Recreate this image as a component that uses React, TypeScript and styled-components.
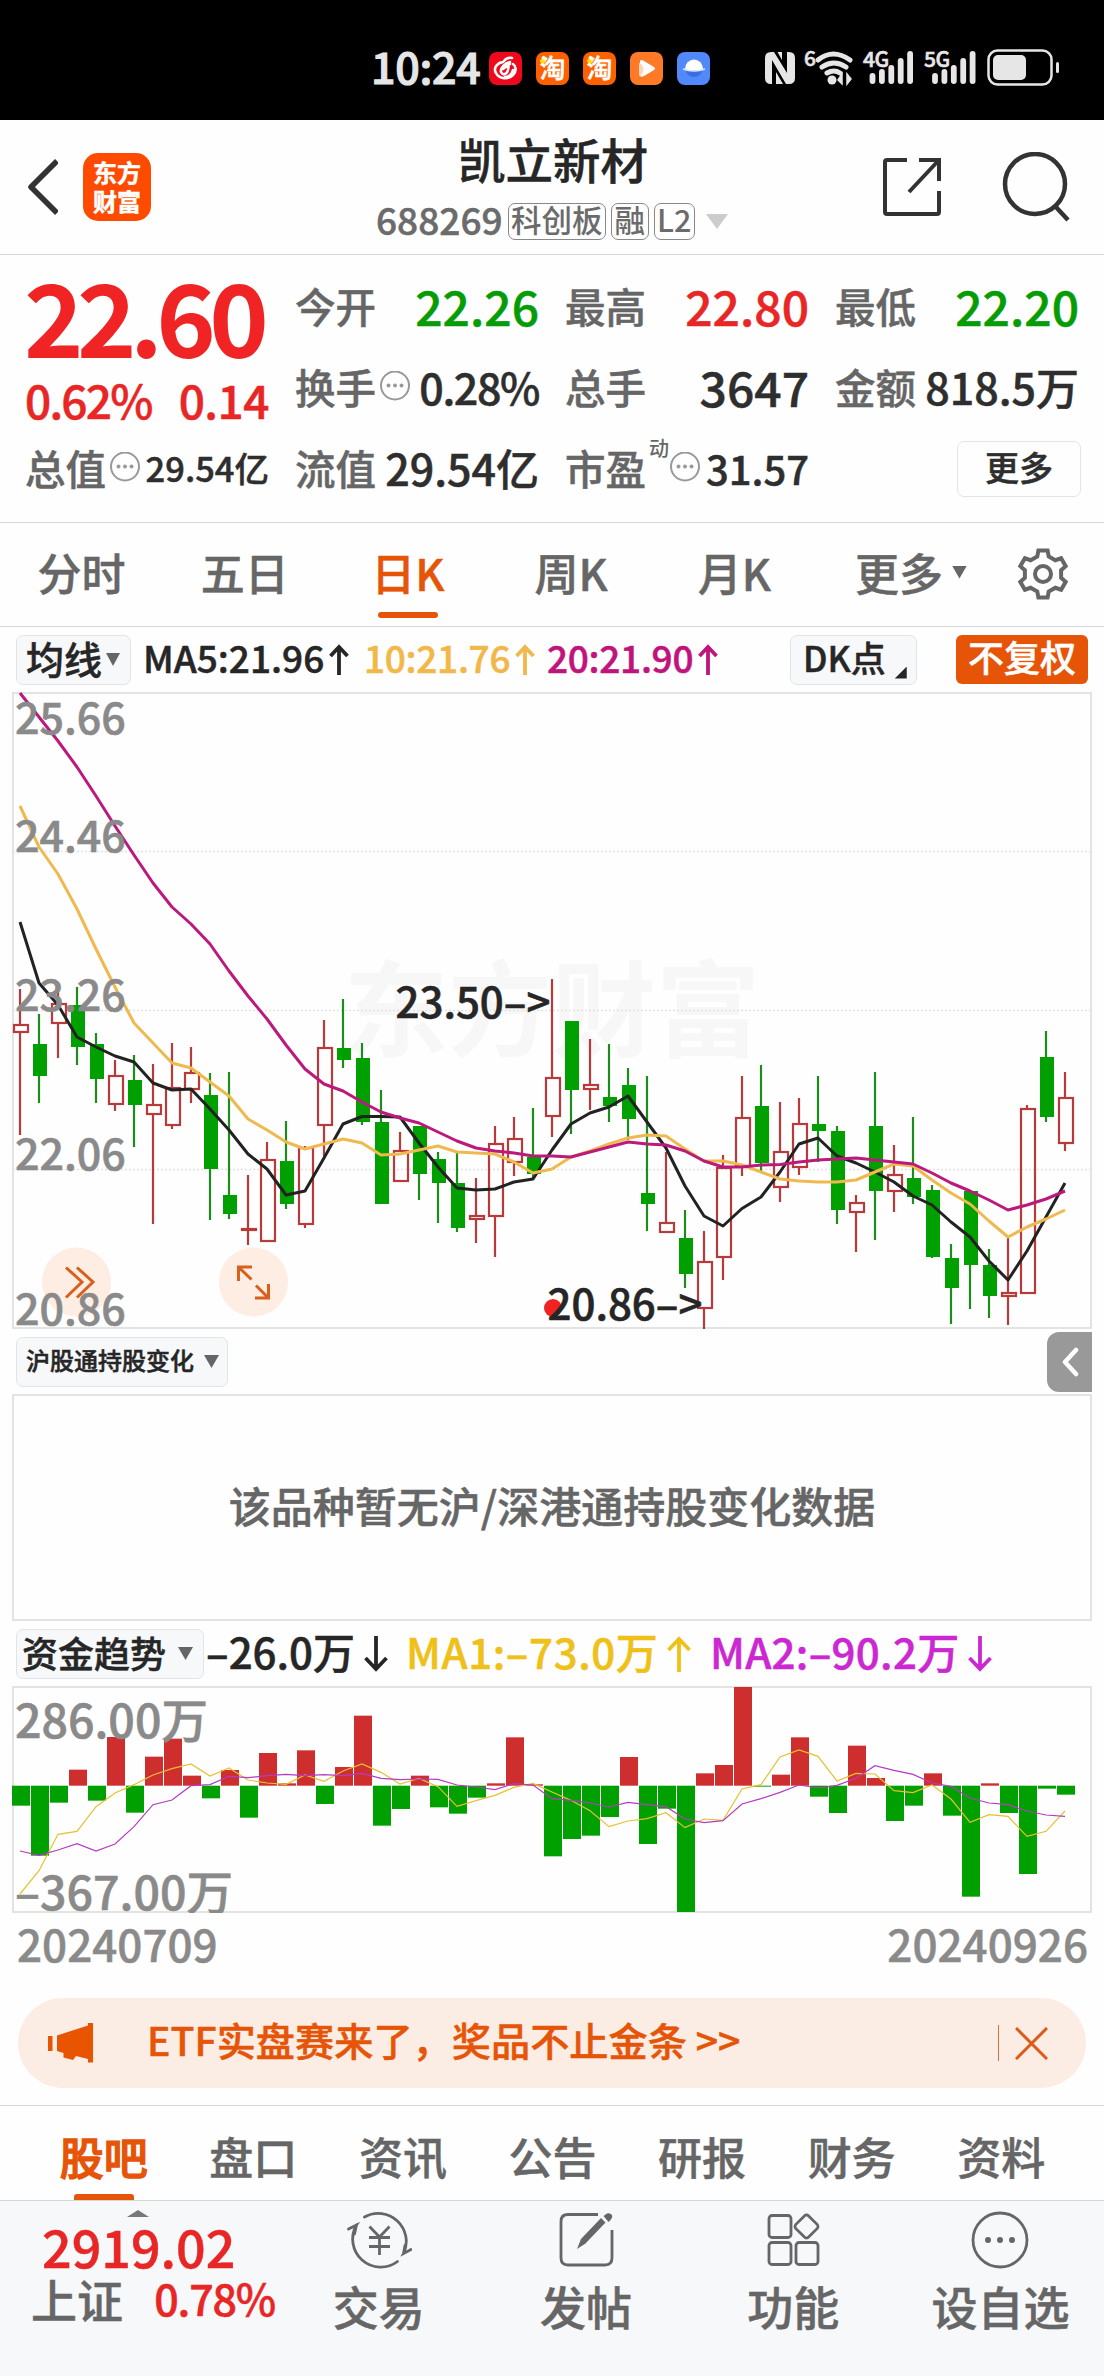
import React from "react";
import styled, { createGlobalStyle, css } from "styled-components";

const RED = "#e82626";
const GREEN = "#069c06";
const ORANGE = "#e65407";
const GRAY = "#666";
const DARK = "#2e2e2e";
const AXIS = "#8a8a8a";
const FONT = '"Noto Sans CJK SC", "Noto Sans", sans-serif';

const Global = createGlobalStyle`
  * { box-sizing: border-box; }
  body { margin: 0; background: #fff; }
  svg { display: block; flex: none; }
`;

const Page = styled.div`
  width: 1104px;
  height: 2376px;
  display: flex;
  flex-direction: column;
  background: #fefefe;
  font-family: ${FONT};
  font-weight: 500;
  color: ${DARK};
  white-space: nowrap;
  overflow: hidden;
  -webkit-text-stroke: 0.500px currentColor;
`;

const Txt = styled.span<{ $size: number; $color?: string; $ls?: number }>`
  font-size: ${(p) => p.$size}px;
  line-height: 1.1;
  color: ${(p) => p.$color ?? "inherit"};
  letter-spacing: ${(p) => p.$ls ?? 0}px;
`;

const Triangle = styled.i<{ $w: number; $h: number; $color: string; $up?: boolean; $ml?: number }>`
  display: block;
  flex: none;
  width: ${(p) => p.$w}px;
  height: ${(p) => p.$h}px;
  margin-left: ${(p) => p.$ml ?? 0}px;
  background: ${(p) => p.$color};
  clip-path: ${(p) => (p.$up ? "polygon(50% 0, 100% 100%, 0 100%)" : "polygon(0 0, 100% 0, 50% 100%)")};
`;

/* ---------- status bar ---------- */

const StatusBar = styled.header`
  height: 120px;
  flex: none;
  background: #000;
  color: #e6e6e6;
  display: flex;
  align-items: flex-start;
  padding: 44px 40px 0 371px;
`;
const Clock = styled.div`
  width: 118px;
  font-size: 43px;
  line-height: 43px;
  letter-spacing: -0.300px;
  -webkit-text-stroke: 1.100px currentColor;
`;
const AppIcons = styled.div`
  display: flex;
  gap: 14px;
  padding-top: 8px;
`;
const AppIcon = styled.div<{ $bg: string }>`
  width: 33px;
  height: 33px;
  border-radius: 8px;
  background: ${(p) => p.$bg};
  color: #fff;
  font-size: 26px;
  line-height: 30px;
  text-align: center;
`;
const TaoIcon = styled(AppIcon)`
  background: radial-gradient(circle at 7px 9px, #ffe600 2.500px, transparent 3px), #ff6000;
`;
const StatusIcons = styled.svg`
  margin-left: auto;
`;

function SignalBars({ x }: { x: number }) {
  return (
    <g stroke="#e6e6e6" strokeWidth="5.8" strokeLinecap="round">
      {[76, 72, 68, 61, 54].map((top, i) => (
        <path key={i} d={`M${x + i * 9.4} ${top}V81`} />
      ))}
    </g>
  );
}

function Status() {
  return (
    <StatusBar>
      <Clock>10:24</Clock>
      <AppIcons>
        <AppIcon $bg="#ee0a1c">
          <svg width="33" height="33" viewBox="0 0 33 33" fill="none" stroke="#fff" strokeWidth="2.6" strokeLinecap="round">
            <path d="M23 6q-5-1-8 3M14 10c-6 1-10 6-7 11 3 6 12 7 17 2 4-4 3-9 0-11M21 10c-5 1-10 6-9 10 2 4 6 2 7-2l1-7M14 17l7-5M16 25c4 0 7-3 8-7" />
          </svg>
        </AppIcon>
        <TaoIcon $bg="#ff6000">淘</TaoIcon>
        <TaoIcon $bg="#ff6000">淘</TaoIcon>
        <AppIcon $bg="#ff7a26">
          <svg width="33" height="33" viewBox="0 0 33 33">
            <path d="M10 9q1-2 4 0l10 6q2 1.500 0 3l-10 6q-4 2-4-1z" fill="#fff" />
            <path d="M9 11a7 7 0 0 1 0 13z" fill="#ffd5b8" />
          </svg>
        </AppIcon>
        <AppIcon $bg="#5189fb">
          <svg width="33" height="33" viewBox="0 0 33 33">
            <path d="M9 18a8 7 0 0 0 16 0z" fill="#3a6de0" />
            <path d="M8 17a9 9.500 0 0 1 18 0q-9 3-18 0z" fill="#fff" />
            <path d="M6 17q11 4 22 0" stroke="#dfe9ff" strokeWidth="1.500" fill="none" />
          </svg>
        </AppIcon>
      </AppIcons>
      <StatusIcons width="304" height="50" viewBox="760 44 304 50" fill="none">
        <path d="M771 52q-6 0-6 6v20q0 6 6 6h1V60l14 24h3q6 0 6-6V58q0-6-6-6h-2v21L774 52z" fill="#e6e6e6" />
        <path d="M777.500 52h4.500v8zM776 72l7 12h-7z" fill="#e6e6e6" />
        <StatusText x="804" y="66" $size={21}>6</StatusText>
        <g stroke="#e6e6e6" strokeWidth="5" strokeLinecap="round">
          <path d="M818 60q15-12 32 0" />
          <path d="M822 67q12-8 24 0" />
          <path d="M827 73q7-4 13 0" />
        </g>
        <circle cx="832" cy="80" r="4.500" fill="#e6e6e6" />
        <path d="M842 74v10l-4-4zM847 84V74l4 5z" fill="#e6e6e6" stroke="#e6e6e6" strokeWidth="1.500" />
        <StatusText x="863" y="67" $size={21}>4G</StatusText>
        <SignalBars x={872.5} />
        <StatusText x="924" y="67" $size={21}>5G</StatusText>
        <SignalBars x={935} />
        <rect x="988.500" y="50.500" width="63" height="34" rx="9" stroke="#e6e6e6" strokeWidth="2.500" />
        <rect x="993" y="55" width="33" height="25" rx="5" fill="#e6e6e6" />
        <rect x="1056" y="62" width="3" height="11" rx="1.500" fill="#e6e6e6" />
      </StatusIcons>
    </StatusBar>
  );
}

const StatusText = styled.text<{ $size: number }>`
  font-family: ${FONT};
  font-weight: 500;
  font-size: ${(p) => p.$size}px;
  letter-spacing: -0.500px;
  fill: #e6e6e6;
  stroke: #e6e6e6;
  stroke-width: 0.600px;
`;

/* ---------- title bar ---------- */

const TitleBar = styled.div`
  height: 135px;
  flex: none;
  border-bottom: 1px solid #d6d6d6;
  display: grid;
  grid-template-columns: 200px 1fr 200px;
  padding: 0 27px;
`;
const TitleLeft = styled.div`
  display: flex;
  align-items: center;
  gap: 25px;
`;
const BrandLogo = styled.div`
  width: 68px;
  height: 68px;
  border-radius: 15px;
  background: #ff4b00;
  color: #fff;
  font-weight: 700;
  font-size: 24px;
  line-height: 29px;
  text-align: center;
  padding-top: 4px;
`;
const TitleCenter = styled.div`
  display: flex;
  flex-direction: column;
  align-items: center;
`;
const StockName = styled.div`
  font-size: 47.500px;
  line-height: 52px;
  margin-top: 13px;
  padding-left: 2px;
  color: #262626;
`;
const CodeLine = styled.div`
  display: flex;
  align-items: center;
  height: 37px;
  margin-top: 18px;
  color: #6b6b6b;
  gap: 5px;
`;
const Code = styled.span`
  font-size: 37px;
  line-height: 32px;
  padding-bottom: 5px;
`;
const Tag = styled.span`
  height: 37px;
  border: 1.500px solid #888;
  border-radius: 7px;
  padding: 0 2.500px;
  font-size: 30.500px;
  line-height: 30px;
  -webkit-text-stroke: 0;
`;
const TitleRight = styled.div`
  display: flex;
  align-items: center;
  justify-content: flex-end;
  gap: 60px;
  padding-right: 6px;
`;

function Title() {
  return (
    <TitleBar>
      <TitleLeft>
        <svg width="31" height="56" viewBox="0 0 31 56" fill="none" stroke="#333" strokeWidth="5.500" strokeLinejoin="round">
          <path d="M30 2L4 28l26 26" />
        </svg>
        <BrandLogo>东方<br />财富</BrandLogo>
      </TitleLeft>
      <TitleCenter>
        <StockName>凯立新材</StockName>
        <CodeLine>
          <Code>688269</Code>
          <Tag>科创板</Tag>
          <Tag>融</Tag>
          <Tag>L2</Tag>
          <Triangle $w={22} $h={15} $color="#ccc" $ml={6} />
        </CodeLine>
      </TitleCenter>
      <TitleRight>
        <svg width="60" height="60" viewBox="0 0 60 60" fill="none" stroke="#333" strokeWidth="4">
          <path d="M25 3H5Q3 3 3 5v50q0 2 2 2h50q2 0 2-2V34M37 3h20v21M57 3L27 35" />
        </svg>
        <svg width="69" height="70" viewBox="0 0 69 70" fill="none" stroke="#333" strokeWidth="4.500">
          <circle cx="33" cy="32" r="30" />
          <path d="M53 54l13 14" />
        </svg>
      </TitleRight>
    </TitleBar>
  );
}

/* ---------- quote grid ---------- */

const Quote = styled.section`
  height: 268px;
  flex: none;
  border-bottom: 1px solid #d6d6d6;
  padding: 10px 25px 0;
  display: grid;
  grid-template-columns: repeat(4, 244px);
  grid-template-rows: repeat(3, 81px);
  column-gap: 26px;
`;
const PriceCell = styled.div`
  grid-row: span 2;
  color: ${RED};
`;
const Price = styled.div`
  font-size: 101px;
  line-height: 98px;
  font-weight: 700;
  letter-spacing: -6.600px;
  margin-left: -1px;
  color: #f02424;
  -webkit-text-stroke: 0;
`;
const Change = styled.div`
  display: flex;
  justify-content: space-between;
  font-size: 46px;
  line-height: 56px;
  margin-top: 8px;
  letter-spacing: -0.500px;
  span:first-child {
    letter-spacing: -1.800px;
  }
`;
const Cell = styled.div`
  display: flex;
  align-items: center;
  justify-content: space-between;
`;
const Label = styled.div`
  display: flex;
  align-items: center;
  gap: 3px;
  font-size: 40.500px;
  color: ${GRAY};
`;
const Sup = styled.sup`
  align-self: flex-start;
  font-size: 20px;
  line-height: 20px;
  margin: 0 -3px 0 0;
  -webkit-text-stroke: 0;
`;
const MoreButton = styled.button`
  justify-self: end;
  align-self: center;
  width: 124px;
  height: 56px;
  margin: 3px -2px 0 0;
  border: 1.500px solid #e4e4e4;
  border-radius: 7px;
  background: #fefefe;
  font: 500 34px/44px ${FONT};
  color: ${DARK};
  padding: 0 0 5px;
`;

function Info() {
  return (
    <svg width="32" height="31" viewBox="0 0 32 31">
      <circle cx="16" cy="14.500" r="14" fill="none" stroke="#999" strokeWidth="2" />
      {[9.5, 16, 22.5].map((x) => (
        <circle key={x} cx={x} cy="14.500" r="2" fill="#999" />
      ))}
    </svg>
  );
}

type QuoteItem = { label: string; value: string; size: number; ls?: number; color?: string; info?: boolean; sup?: string };
const quotes: QuoteItem[] = [
  { label: "今开", value: "22.26", size: 48, color: GREEN },
  { label: "最高", value: "22.80", size: 48, color: RED },
  { label: "最低", value: "22.20", size: 48, color: GREEN },
  { label: "换手", value: "0.28%", size: 43, ls: -1.4, info: true },
  { label: "总手", value: "3647", size: 48 },
  { label: "金额", value: "818.5万", size: 43 },
  { label: "总值", value: "29.54亿", size: 34.5, info: true },
  { label: "流值", value: "29.54亿", size: 43 },
  { label: "市盈", value: "31.57", size: 40, info: true, sup: "动" },
];

function Quotes() {
  return (
    <Quote>
      <PriceCell>
        <Price>22.60</Price>
        <Change>
          <span>0.62%</span>
          <span>0.14</span>
        </Change>
      </PriceCell>
      {quotes.map((q) => (
        <Cell key={q.label}>
          <Label>
            {q.label}
            {q.sup && <Sup>{q.sup}</Sup>}
            {q.info && <Info />}
          </Label>
          <Txt $size={q.size} $color={q.color} $ls={q.ls}>{q.value}</Txt>
        </Cell>
      ))}
      <MoreButton>更多</MoreButton>
    </Quote>
  );
}

/* ---------- period tabs ---------- */

const Periods = styled.nav`
  height: 104px;
  flex: none;
  border-bottom: 1px solid #d6d6d6;
  display: grid;
  grid-template-columns: repeat(5, 163.200px) 190px 1fr;
`;
const Tab = styled.div<{ $active?: boolean; $gap?: number }>`
  position: relative;
  display: flex;
  align-items: center;
  justify-content: center;
  gap: ${(p) => p.$gap ?? 0}px;
  font-size: 44px;
  line-height: 50px;
  padding-bottom: 5px;
  color: ${(p) => (p.$active ? ORANGE : GRAY)};
  ${(p) =>
    p.$active &&
    css`
      &::after {
        content: "";
        position: absolute;
        left: 50%;
        bottom: 8px;
        width: 60px;
        height: 6px;
        margin-left: -30px;
        border-radius: 3px;
        background: ${ORANGE};
      }
    `}
`;
const GearCell = styled.div`
  display: flex;
  align-items: center;
  padding: 0 0 2px 10px;
`;

const gearPath = (() => {
  const pts: string[] = [];
  for (let i = 0; i < 6; i++) {
    const a = i * 60 - 90;
    const add = (r: number, d: number) => {
      const t = ((a + d) * Math.PI) / 180;
      pts.push(`${(27 + r * Math.cos(t)).toFixed(2)} ${(27 + r * Math.sin(t)).toFixed(2)}`);
    };
    add(18.5, -18);
    add(24, -11);
    add(24, 11);
    add(18.5, 18);
  }
  return `M${pts.join("L")}Z`;
})();

function PeriodTabs() {
  return (
    <Periods>
      <Tab>分时</Tab>
      <Tab>五日</Tab>
      <Tab $active>日K</Tab>
      <Tab>周K</Tab>
      <Tab>月K</Tab>
      <Tab $gap={9}>
        更多
        <Triangle $w={15} $h={13} $color={GRAY} />
      </Tab>
      <GearCell>
        <svg width="54" height="54" viewBox="0 0 54 54" fill="none" stroke={GRAY} strokeWidth="4">
          <path d={gearPath} />
          <circle cx="27" cy="27" r="8" />
        </svg>
      </GearCell>
    </Periods>
  );
}

/* ---------- indicator rows ---------- */

const IndicatorRow = styled.div<{ $h: number }>`
  height: ${(p) => p.$h}px;
  flex: none;
  display: flex;
  align-items: center;
  padding: 0 12px 0 16px;
`;
const Picker = styled.div<{ $w: number; $size: number; $pl: number; $gap: number }>`
  width: ${(p) => p.$w}px;
  height: 50px;
  flex: none;
  display: flex;
  align-items: center;
  gap: ${(p) => p.$gap}px;
  padding-left: ${(p) => p.$pl}px;
  border: 1.500px solid #e2e4e8;
  border-radius: 7px;
  background: #f7f8fa;
  color: #262626;
  span {
    font-size: ${(p) => p.$size}px;
    line-height: 44px;
    padding-bottom: 4px;
  }
`;
const Legend = styled.div<{ $size: number; $color: string; $w: number; $ls?: number; $gap?: number; $ml?: number }>`
  width: ${(p) => p.$w}px;
  display: flex;
  align-items: center;
  gap: ${(p) => p.$gap ?? 5}px;
  margin-left: ${(p) => p.$ml ?? 0}px;
  flex: none;
  font-size: ${(p) => p.$size}px;
  line-height: 50px;
  letter-spacing: ${(p) => p.$ls ?? 0}px;
  color: ${(p) => p.$color};
  span {
    padding-bottom: 6px;
  }
`;
const DkButton = styled.div`
  width: 127px;
  height: 50px;
  margin-left: auto;
  border: 1.500px solid #e2e4e8;
  border-radius: 7px;
  background: #f7f8fa;
  font-size: 35px;
  line-height: 42px;
  padding-left: 12px;
  display: flex;
  color: #262626;
`;
const Corner = styled.i`
  width: 12px;
  height: 12px;
  align-self: flex-end;
  margin: 0 0 5px 9px;
  background: #262626;
  clip-path: polygon(100% 0, 100% 100%, 0 100%);
`;
const Adjust = styled.div`
  width: 132px;
  height: 49px;
  margin: 0 4px 0 39px;
  border-radius: 6px;
  background: ${ORANGE};
  color: #fff;
  font-size: 36px;
  line-height: 43px;
  text-align: center;
`;
const Expander = styled.div`
  width: 45px;
  height: 60px;
  margin-left: auto;
  border-radius: 12px 0 0 12px;
  background: #999;
  display: flex;
  align-items: center;
  justify-content: center;
`;

function Arrow({ down, w = 20, h = 31 }: { down?: boolean; w?: number; h?: number }) {
  return (
    <svg width={w} height={h} viewBox={`0 0 ${w} ${h}`} fill="none" stroke="currentColor" strokeWidth="3.800">
      <path
        transform={down ? `rotate(180 ${w / 2} ${h / 2})` : undefined}
        d={`M${w / 2} ${h}V3M1.500 ${w / 2 + 2}L${w / 2} 3l${w / 2 - 1.5} ${w / 2 - 1}`}
      />
    </svg>
  );
}

/* ---------- candlestick chart ---------- */

const STEP = 19;
const cx = (i: number) => 20 + i * STEP;

// [up, high, bodyTop, bodyBottom, low] on the chart's pixel scale
const candles: [number, number, number, number, number][] = [
  [1, 989, 1024, 1033, 1135], [0, 1014, 1044, 1076, 1103], [1, 991, 1003, 1024, 1058], [0, 987, 1005, 1047, 1065],
  [0, 1033, 1044, 1079, 1103], [1, 1060, 1075, 1105, 1111], [0, 1055, 1080, 1105, 1147], [1, 1064, 1104, 1115, 1224],
  [1, 1043, 1087, 1126, 1129], [1, 1047, 1072, 1090, 1103], [0, 1073, 1095, 1169, 1220], [0, 1072, 1195, 1214, 1219],
  [1, 1175, 1228, 1231, 1245], [1, 1142, 1159, 1242, 1242], [0, 1121, 1161, 1204, 1209], [1, 1146, 1147, 1225, 1228],
  [1, 1020, 1047, 1126, 1156], [0, 999, 1048, 1060, 1068], [0, 1043, 1058, 1122, 1125], [0, 1090, 1122, 1204, 1204],
  [1, 1132, 1150, 1182, 1182], [0, 1126, 1126, 1174, 1200], [0, 1152, 1159, 1183, 1223], [0, 1152, 1183, 1228, 1232],
  [1, 1178, 1215, 1220, 1243], [1, 1126, 1143, 1217, 1257], [1, 1117, 1138, 1163, 1176], [0, 1108, 1157, 1174, 1178],
  [1, 979, 1077, 1117, 1137], [0, 1021, 1021, 1090, 1134], [1, 1039, 1084, 1090, 1110], [0, 1044, 1097, 1106, 1122],
  [0, 1068, 1085, 1119, 1140], [0, 1076, 1193, 1204, 1231], [1, 1152, 1222, 1233, 1233], [0, 1210, 1238, 1274, 1288],
  [1, 1231, 1261, 1309, 1329], [1, 1155, 1167, 1258, 1280], [1, 1076, 1117, 1167, 1176], [0, 1065, 1106, 1163, 1172],
  [1, 1102, 1151, 1188, 1202], [1, 1098, 1123, 1168, 1175], [0, 1076, 1124, 1131, 1162], [0, 1126, 1131, 1210, 1224],
  [1, 1195, 1202, 1213, 1252], [0, 1072, 1126, 1191, 1240], [1, 1145, 1174, 1192, 1212], [0, 1117, 1178, 1197, 1204],
  [0, 1185, 1190, 1257, 1258], [0, 1244, 1258, 1288, 1324], [0, 1191, 1191, 1265, 1309], [0, 1249, 1265, 1296, 1318],
  [1, 1238, 1292, 1297, 1325], [1, 1105, 1108, 1294, 1294], [0, 1031, 1057, 1117, 1122], [1, 1072, 1097, 1144, 1151],
];
const ma5 = [922, 983, 1005, 1037, 1047, 1056, 1062, 1083, 1090, 1089, 1109, 1130, 1154, 1169, 1195, 1191, 1158, 1124, 1116.5, 1116.5, 1117, 1143, 1167, 1188, 1190, 1189, 1182, 1179, 1150, 1124, 1113, 1107, 1096, 1122, 1148, 1186, 1216, 1226, 1208.5, 1197, 1172, 1144, 1138, 1156, 1163, 1172, 1182, 1196, 1205, 1222, 1237, 1261, 1280, 1251, 1217, 1183];
const ma10 = [806, 847, 874, 909, 949, 987, 1023, 1043, 1063, 1068, 1082, 1096, 1119, 1130, 1142, 1149, 1144, 1139, 1143, 1155, 1154, 1150, 1146, 1152, 1153, 1154, 1162, 1173, 1169, 1157, 1151, 1144, 1138, 1135, 1136, 1149, 1161, 1161, 1165, 1172, 1179, 1181, 1182, 1182, 1180, 1172, 1164, 1166, 1180, 1193, 1204, 1221, 1237, 1227, 1219, 1210];
const ma20 = [693, 717, 741, 767, 796, 826, 855, 883, 907, 924, 944, 971, 996, 1019, 1045, 1069, 1084, 1091, 1102, 1112, 1118, 1123, 1132, 1141, 1148, 1151, 1153, 1156, 1156, 1157, 1152, 1147, 1142, 1144, 1145, 1151, 1161, 1167, 1167, 1165, 1164.5, 1162, 1160, 1159, 1158, 1160, 1162, 1164, 1173, 1183, 1191, 1200, 1210, 1205, 1199, 1191];
const line = (ys: number[]) => ys.map((y, i) => `${i ? "L" : "M"}${cx(i)} ${y}`).join("");

const ChartBox = styled.div`
  flex: none;
  padding-left: 12px;
`;
const ChartText = styled.text<{ $size: number; $color: string }>`
  font-family: ${FONT};
  font-weight: 500;
  font-size: ${(p) => p.$size}px;
  fill: ${(p) => p.$color};
  stroke: ${(p) => p.$color};
  stroke-width: 0.600px;
`;
const Watermark = styled.text`
  font-family: ${FONT};
  font-weight: 700;
  font-size: 104px;
  fill: #f7f7f7;
`;

function CandleChart() {
  return (
    <ChartBox>
      <svg width="1080" height="637" viewBox="12 692 1080 637" fill="none">
        <Watermark x="344" y="1049">东方财富</Watermark>
        <rect x="13" y="693" width="1078" height="635" stroke="#e3e3e3" strokeWidth="2" />
        {[851.5, 1010.5, 1169.5].map((y) => (
          <path key={y} d={`M13 ${y}H1091`} stroke="#e2e2e2" strokeWidth="1.500" strokeDasharray="2 2" />
        ))}
        {candles.map(([up, hi, top, bottom, lo], i) => {
          const x = cx(i);
          return up ? (
            <g key={i} stroke="#b93a3a" strokeWidth="2.200">
              <path d={`M${x} ${hi}V${top}M${x} ${bottom}V${lo}`} />
              <rect x={x - 6} y={top + 1} width="14" height={Math.max(bottom - top - 2, 1)} />
            </g>
          ) : (
            <g key={i}>
              <path d={`M${x} ${hi}V${lo}`} stroke="#1c8c1c" strokeWidth="2.200" />
              <rect x={x - 6} y={top} width="14" height={bottom - top} fill="#00a000" />
            </g>
          );
        })}
        <g strokeWidth="3" strokeLinejoin="round">
          <path d={line(ma5)} stroke="#222" />
          <path d={line(ma10)} stroke="#efb94f" />
          <path d={line(ma20)} stroke="#bb1a7c" />
        </g>
        {[76.5, 253.5].map((x) => (
          <circle key={x} cx={x} cy="1282" r="34.500" fill="#fde8dc" fillOpacity="0.800" />
        ))}
        {[
          ["25.66", 734],
          ["24.46", 852],
          ["23.26", 1010.5],
          ["22.06", 1169.5],
          ["20.86", 1324.5],
        ].map(([t, y]) => (
          <ChartText key={t} x="15" y={y} $size={43} $color={AXIS}>{t}</ChartText>
        ))}
        <g stroke="#d8601c" strokeWidth="3">
          <path d="M66 1267.500l16 14.500-16 15.500M77 1267.500l16 14.500-16 15.500" />
          <path d="M252 1267h-13.500v14M239 1267.500l12.500 12M255 1298h13.500v-14M268 1297.500l-12-12" />
        </g>
        <circle cx="553" cy="1308" r="9" fill="#f02222" />
        <ChartText x="395.500" y="1017.500" $size={42} $color="#262626">23.50–&gt;</ChartText>
        <ChartText x="547.500" y="1319.500" $size={42} $color="#262626">20.86–&gt;</ChartText>
      </svg>
    </ChartBox>
  );
}

/* ---------- holdings panel ---------- */

const EmptyPanel = styled.div`
  height: 227px;
  flex: none;
  margin: 0 12px;
  border: 2px solid #e3e3e3;
  display: flex;
  align-items: center;
  justify-content: center;
  font-size: 42px;
  padding-bottom: 6px;
  color: ${GRAY};
`;

/* ---------- capital trend chart ---------- */

const ZERO = 1785.7;
const flowY = (v: number) => 1670 + v / 3;
const flows = [407, 557, 398, 299, 392, 201, 428, 260, 206, 317, 385, 300, 443, 249, 340, 241, 402, 291, 137, 467, 417, 317, 412, 431, 383, 340, 202, 343, 559, 507, 497, 441, 261, 522, 416, 726, 310, 285, 51, 350, 314, 202, 380, 429, 227, 324, 453, 407, 310, 437, 680, 340, 429, 612, 356, 374];
const flowMa1 = [672, 602, 493, 484, 410, 369, 344, 315, 296, 282, 318, 294, 330, 339, 343, 315, 334, 303, 282, 307, 342, 325, 350, 409, 392, 376, 352, 340, 366, 391, 422, 470, 453, 446, 428, 473, 447, 451, 357, 344, 261, 240, 259, 333, 310, 312, 362, 368, 345, 387, 457, 434, 439, 499, 484, 423];
const flowMa2 = [543, 556, 540, 521, 543, 522, 470, 404, 390, 347, 344, 319, 323, 317, 313, 317, 314, 317, 310, 325, 329, 327, 328, 345, 351, 359, 341, 345, 386, 391, 399, 411, 397, 404, 410, 447, 458, 452, 402, 386, 367, 345, 354, 346, 325, 287, 301, 313, 339, 349, 384, 399, 404, 423, 435, 439];

function FlowChart() {
  return (
    <ChartBox>
      <svg width="1080" height="227" viewBox="12 1686 1080 227" fill="none">
        <rect x="13" y="1687" width="1078" height="225" stroke="#e3e3e3" strokeWidth="2" />
        {flows.map((v, i) => {
          const y = flowY(v);
          return (
            <rect
              key={i}
              x={12 + i * STEP}
              y={Math.min(y, ZERO)}
              width="18"
              height={Math.abs(y - ZERO)}
              fill={y < ZERO ? "#cf2e2e" : "#00a000"}
            />
          );
        })}
        <path d={line(flowMa1.map(flowY))} stroke="#e6c030" strokeWidth="1.200" />
        <path d={line(flowMa2.map(flowY))} stroke="#b43cc0" strokeWidth="1.200" />
        <ChartText x="15" y="1737.500" $size={46.5} $color={AXIS}>286.00万</ChartText>
        <ChartText x="15" y="1909.500" $size={46.5} $color={AXIS}>–367.00万</ChartText>
      </svg>
    </ChartBox>
  );
}

const Dates = styled.div`
  height: 85px;
  flex: none;
  display: flex;
  justify-content: space-between;
  padding: 3px 16px 0 17px;
  font-size: 44px;
  line-height: 54px;
  color: ${AXIS};
`;

/* ---------- banner ---------- */

const Banner = styled.div`
  height: 90px;
  flex: none;
  margin: 0 18px 17px;
  border-radius: 45px;
  background: #fcede4;
  color: ${ORANGE};
  display: flex;
  align-items: center;
  padding: 0 38px 0 30px;
`;
const BannerText = styled.span`
  flex: 1;
  margin-left: 53px;
  font-size: 39.200px;
  line-height: 50px;
  padding-bottom: 8px;
`;
const BannerRule = styled.i`
  width: 1.500px;
  height: 36px;
  margin-right: 16px;
  background: #d8713c;
`;

/* ---------- section tabs ---------- */

const Sections = styled.nav`
  height: 96px;
  flex: none;
  border-top: 1px solid #d6d6d6;
  border-bottom: 1px solid #d6d6d6;
  padding: 0 28px 0 29px;
  display: grid;
  grid-template-columns: repeat(7, 1fr);
`;
const SectionTab = styled(Tab)`
  align-items: flex-start;
  padding: 25px 0 0;
  -webkit-text-stroke-width: ${(p) => (p.$active ? 1.3 : 0.5)}px;
  &::after {
    bottom: 0;
    border-radius: 3px 3px 0 0;
  }
`;

/* ---------- bottom bar ---------- */

const BottomBar = styled.footer`
  flex: 1;
  background: #f7f8fa;
  display: grid;
  grid-template-columns: 275px repeat(4, 1fr);
`;
const IndexCell = styled.div`
  display: flex;
  flex-direction: column;
  color: ${RED};
  padding: 9px 0 0 31px;
`;
const IndexPrice = styled.div`
  font-size: 52px;
  line-height: 56px;
  margin: 1px 0 -4px 11px;
`;
const IndexLine = styled.div`
  display: flex;
  align-items: center;
  justify-content: space-between;
`;
const IndexName = styled.span`
  font-size: 46px;
  line-height: 56px;
  color: ${GRAY};
`;
const Action = styled.div`
  display: flex;
  flex-direction: column;
  align-items: center;
  padding-top: 7px;
  color: ${GRAY};
  font-size: 46px;
  line-height: 56px;
  gap: 5px;
`;

const iconProps = { width: 66, height: 64, fill: "none", stroke: GRAY, strokeWidth: 2.8 } as const;

function Bottom() {
  return (
    <BottomBar>
      <IndexCell>
        <Triangle $w={22} $h={7} $color="#77777c" $up $ml={96} />
        <IndexPrice>2919.02</IndexPrice>
        <IndexLine>
          <IndexName>上证</IndexName>
          <Txt $size={43} $ls={-1.2}>0.78%</Txt>
        </IndexLine>
      </IndexCell>
      <Action>
        <svg {...iconProps} viewBox="345 2208 66 64">
          <g strokeLinecap="round">
            <path d="M363.500 2217A28 28 0 0 1 402.500 2253.500l7.500-4M402.500 2253.500l1.500-8" />
            <path d="M396.500 2261.500A28 28 0 0 1 355.500 2225l-8 4M355.500 2225l-2 9" />
          </g>
          <path d="M368.500 2226.500l10 10.500 10-10.500M378.500 2237v18M368 2237.500h21M368 2246.500h21" />
        </svg>
        交易
      </Action>
      <Action>
        <svg {...iconProps} viewBox="553 2208 66 64">
          <path d="M598 2214.500H568q-7 0-7 7V2258q0 7 7 7h37q7 0 7-7v-28" />
          <path d="M577 2249l4-10 20-21 4.500 4.500-20 21zM603.500 2216l3.500-2.500q3-1 5 1.500 1 2.500-1 4.500l-2.500 2.500z" fill={GRAY} stroke="none" />
        </svg>
        发帖
      </Action>
      <Action>
        <svg {...iconProps} viewBox="760 2208 66 64">
          <rect x="769" y="2215.500" width="22" height="22" rx="3" />
          <rect x="769" y="2242.500" width="22" height="22" rx="3" />
          <rect x="796" y="2242.500" width="22" height="22" rx="3" />
          <rect x="797.500" y="2217.500" width="18" height="18" rx="3" transform="rotate(45 806.500 2226.500)" />
        </svg>
        功能
      </Action>
      <Action>
        <svg {...iconProps} viewBox="967 2208 66 64">
          <circle cx="1000" cy="2240" r="27" />
          {[988, 1000, 1012].map((x) => (
            <circle key={x} cx={x} cy="2240" r="3" fill={GRAY} stroke="none" />
          ))}
        </svg>
        设自选
      </Action>
    </BottomBar>
  );
}

export default function App() {
  return (
    <Page>
      <Global />
      <Status />
      <Title />
      <Quotes />
      <PeriodTabs />
      <IndicatorRow $h={65}>
        <Picker $w={115} $size={38} $pl={9} $gap={4}>
          <span>均线</span>
          <Triangle $w={14} $h={13} $color={GRAY} />
        </Picker>
        <Legend $size={37} $color="#262626" $w={221} $ml={12}>
          <span>MA5:21.96</span>
          <Arrow />
        </Legend>
        <Legend $size={37} $color="#f2b749" $w={183} $ls={-0.3}>
          <span>10:21.76</span>
          <Arrow />
        </Legend>
        <Legend $size={37} $color="#c0147c" $w={178} $ls={-0.3}>
          <span>20:21.90</span>
          <Arrow />
        </Legend>
        <DkButton>
          DK点
          <Corner />
        </DkButton>
        <Adjust>不复权</Adjust>
      </IndicatorRow>
      <CandleChart />
      <IndicatorRow $h={65}>
        <Picker $w={212} $size={24} $pl={9} $gap={10}>
          <span>沪股通持股变化</span>
          <Triangle $w={15} $h={13} $color={GRAY} />
        </Picker>
        <Expander>
          <svg width="18" height="30" viewBox="0 0 18 30" fill="none" stroke="#fff" strokeWidth="4.500" strokeLinecap="round" strokeLinejoin="round">
            <path d="M15 3L4 15l11 12" />
          </svg>
        </Expander>
      </IndicatorRow>
      <EmptyPanel>该品种暂无沪/深港通持股变化数据</EmptyPanel>
      <IndicatorRow $h={65}>
        <Picker $w={188} $size={36} $pl={5} $gap={12}>
          <span>资金趋势</span>
          <Triangle $w={15} $h={13} $color={GRAY} />
        </Picker>
        <Legend $size={42} $color="#262626" $w={200} $ml={2} $gap={9}>
          <span>–26.0万</span>
          <Arrow down w={24} h={36} />
        </Legend>
        <Legend $size={42} $color="#efc018" $w={304} $ls={0.6} $gap={9}>
          <span>MA1:–73.0万</span>
          <Arrow w={24} h={36} />
        </Legend>
        <Legend $size={42} $color="#cb28d2" $w={290} $ls={0.3} $gap={9}>
          <span>MA2:–90.2万</span>
          <Arrow down w={24} h={36} />
        </Legend>
      </IndicatorRow>
      <FlowChart />
      <Dates>
        <span>20240709</span>
        <span>20240926</span>
      </Dates>
      <Banner>
        <svg width="46" height="40" viewBox="48 2023 46 40" fill="#e85400">
          <path d="M48 2036h4.500v15H48zM57 2035.500l31-10V2023h5v39.500h-5V2059l-12-3-3 4-9.500-2.500V2053l-6.500-2z" />
        </svg>
        <BannerText>ETF实盘赛来了，奖品不止金条 &gt;&gt;</BannerText>
        <BannerRule />
        <svg width="33" height="33" viewBox="0 0 33 33" fill="none" stroke="#dd5a18" strokeWidth="3">
          <path d="M1 1l31 31M32 1L1 32" />
        </svg>
      </Banner>
      <Sections>
        {["股吧", "盘口", "资讯", "公告", "研报", "财务", "资料"].map((t, i) => (
          <SectionTab key={t} $active={i === 0}>{t}</SectionTab>
        ))}
      </Sections>
      <Bottom />
    </Page>
  );
}
